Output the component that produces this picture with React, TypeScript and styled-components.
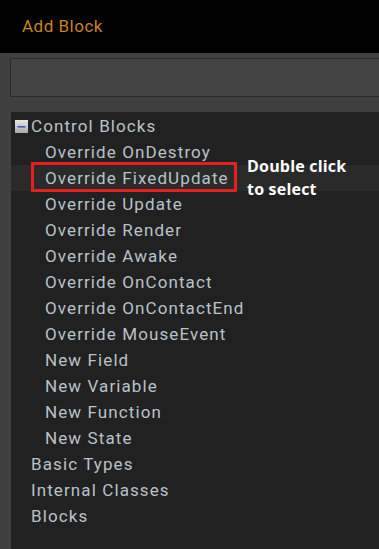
import styled, { createGlobalStyle } from 'styled-components';

const GlobalStyle = createGlobalStyle`
  html, body {
    margin: 0;
    padding: 0;
    background: #404040;
  }
  * {
    box-sizing: border-box;
  }
`;

const Page = styled.div`
  display: flex;
  flex-direction: column;
  height: 549px;
  overflow: hidden;
  font-family: Roboto, 'Liberation Sans', sans-serif;
`;

const Header = styled.header`
  height: 53px;
  flex: none;
  background: #000;
  display: flex;
  align-items: center;
  padding-left: 22px;
  padding-bottom: 2px;
`;

const Title = styled.h1`
  margin: 0;
  font-size: 17px;
  font-weight: 400;
  letter-spacing: 0.5px;
  color: #c9831a;
`;

const Toolbar = styled.div`
  flex: none;
  display: flex;
  padding: 5px 0 15px 10px;
  background: #404040;
`;

const Search = styled.input`
  flex: 1;
  height: 39px;
  margin-right: -10px;
  background: #444;
  border: 1px solid #2b2b2b;
  outline: none;
`;

const TreePanel = styled.ul`
  flex: 1;
  list-style: none;
  margin: 0 0 0 11px;
  padding: 1px 0 0;
  background: #212121;
`;

const Row = styled.li<{ $depth: number; $active?: boolean }>`
  position: relative;
  height: 26px;
  display: flex;
  align-items: center;
  gap: 3px;
  padding-left: ${(p) => (p.$depth === 0 ? 20 : 34)}px;
  background: ${(p) => (p.$active ? '#2a2a2a' : 'transparent')};
  color: #bac1c9;
  font-size: 17px;
  letter-spacing: 1.1px;
  white-space: nowrap;

  &:has(> svg) {
    padding-left: 4px;
  }
`;

const Marker = styled.span`
  position: absolute;
  left: 20px;
  top: -3px;
  width: 206px;
  height: 30px;
  border: 3px solid #e41f1f;
`;

const Note = styled.span`
  position: absolute;
  left: 236px;
  top: -10px;
  font-family: 'Open Sans', 'Liberation Sans', sans-serif;
  font-weight: 700;
  font-size: 16px;
  line-height: 23px;
  color: #fff;
  letter-spacing: 0.2px;
`;

const Collapse = () => (
  <svg width="13" height="13" viewBox="0 0 13 13">
    <defs>
      <linearGradient id="cb" x1="0" y1="0" x2="0" y2="1">
        <stop offset="0" stopColor="#e8e8e8" />
        <stop offset="1" stopColor="#a9a9a9" />
      </linearGradient>
    </defs>
    <rect x="0" y="0" width="13" height="13" fill="url(#cb)" />
    <rect x="2.5" y="6" width="8" height="1.6" fill="#4262b8" />
  </svg>
);

const children = [
  'Override OnDestroy',
  'Override FixedUpdate',
  'Override Update',
  'Override Render',
  'Override Awake',
  'Override OnContact',
  'Override OnContactEnd',
  'Override MouseEvent',
  'New Field',
  'New Variable',
  'New Function',
  'New State',
];

const roots = ['Basic Types', 'Internal Classes', 'Blocks'];

export default function App() {
  return (
    <Page>
      <GlobalStyle />
      <Header>
        <Title>Add Block</Title>
      </Header>
      <Toolbar>
        <Search aria-label="Search blocks" />
      </Toolbar>
      <TreePanel>
        <Row $depth={0}>
          <Collapse />
          Control Blocks
        </Row>
        {children.map((name) => {
          const active = name === 'Override FixedUpdate';
          return (
            <Row key={name} $depth={1} $active={active}>
              {name}
              {active && (
                <>
                  <Marker />
                  <Note>
                    Double click
                    <br />
                    to select
                  </Note>
                </>
              )}
            </Row>
          );
        })}
        {roots.map((name) => (
          <Row key={name} $depth={0}>
            {name}
          </Row>
        ))}
      </TreePanel>
    </Page>
  );
}
